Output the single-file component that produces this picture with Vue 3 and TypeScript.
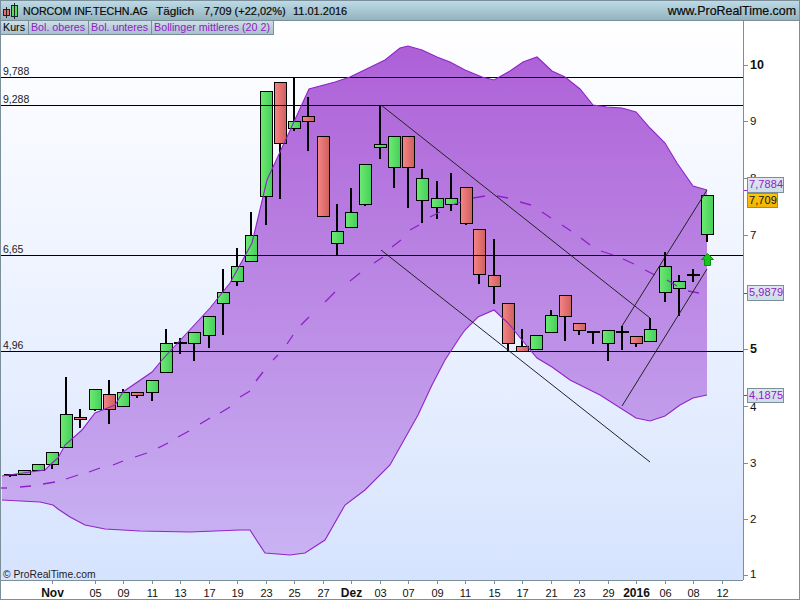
<script setup lang="ts">
type Candle = { x: number; top: number; bot: number; hi: number; lo: number; up: boolean };
type Doji = { x: number; y: number; hi: number; lo: number };

const raw: [number, number, number, number, number, number][] = [
  [24, 470, 475, 470, 475, 1], [38, 464, 471, 464, 471, 1], [52, 452, 465, 452, 469, 1],
  [66, 414, 448, 377, 448, 1], [80, 417, 420, 409, 428, 0], [95, 389, 410, 389, 411, 1],
  [109, 394, 410, 380, 424, 0], [123, 392, 407, 389, 407, 1], [137, 392, 396, 392, 398, 0],
  [152, 380, 393, 380, 401, 1], [166, 343, 373, 329, 373, 1], [194, 332, 344, 332, 361, 1],
  [209, 316, 336, 316, 348, 1], [223, 292, 304, 269, 335, 1], [237, 266, 282, 248, 286, 1],
  [251, 235, 262, 212, 262, 1], [266, 91, 197, 91, 225, 1], [280, 82, 144, 82, 199, 0],
  [294, 121, 129, 77, 131, 1], [308, 116, 122, 97, 151, 0], [323, 136, 217, 136, 217, 0],
  [337, 231, 244, 204, 255, 1], [351, 212, 228, 188, 228, 1], [365, 164, 205, 164, 206, 1],
  [380, 144, 148, 105, 159, 1], [394, 136, 168, 136, 188, 1], [408, 136, 168, 136, 208, 0],
  [422, 178, 201, 169, 223, 1], [437, 198, 208, 181, 219, 1], [451, 198, 205, 173, 211, 1],
  [466, 187, 224, 187, 225, 0], [479, 229, 275, 229, 284, 0], [494, 275, 287, 239, 304, 0],
  [508, 303, 344, 303, 352, 0], [522, 346, 352, 329, 352, 0], [536, 335, 350, 335, 350, 1],
  [551, 315, 333, 310, 333, 1], [565, 295, 317, 295, 341, 0], [579, 323, 331, 323, 335, 0],
  [608, 330, 344, 330, 361, 1], [636, 336, 344, 336, 347, 0], [650, 329, 342, 318, 342, 1],
  [665, 266, 293, 252, 302, 1], [679, 281, 289, 275, 316, 1], [707, 195, 235, 195, 242, 1],
];
const candles: Candle[] = raw.map(([x, top, bot, hi, lo, up]) => ({ x, top, bot, hi, lo, up: up === 1 }));
const dojis: Doji[] = [
  { x: 10, y: 475, hi: 474, lo: 477 }, { x: 180, y: 343, hi: 338, lo: 354 },
  { x: 593, y: 332, hi: 331, lo: 344 }, { x: 622, y: 332, hi: 326, lo: 350 },
  { x: 693, y: 275, hi: 269, lo: 282 },
];

const upper: [number, number][] = [
  [2, 476], [30, 472], [45, 470], [52, 463], [58, 458], [65, 445], [82, 430], [95, 413], [115, 405], [123, 392],
  [152, 372], [162, 360], [210, 308], [230, 283], [252, 243], [267, 180], [287, 137], [309, 89], [335, 82], [350, 77],
  [385, 60], [400, 48], [408, 46], [422, 50], [437, 57], [450, 62], [465, 70], [482, 77], [494, 80], [510, 71],
  [523, 62], [537, 57], [552, 71], [565, 77], [580, 89], [593, 105], [607, 107], [622, 108], [636, 112], [650, 128],
  [665, 143], [677, 163], [693, 186], [707, 190],
];
const lower: [number, number][] = [
  [2, 500], [40, 502], [53, 505], [58, 509], [70, 517], [85, 525], [105, 529], [140, 531], [190, 532], [240, 530],
  [250, 530], [265, 553], [290, 555], [305, 553], [325, 540], [345, 505], [365, 490], [390, 465], [404, 440], [418, 415],
  [432, 385], [445, 360], [460, 337], [465, 330], [478, 317], [494, 310], [508, 323], [522, 340], [537, 358], [552, 367],
  [570, 380], [600, 395], [636, 418], [650, 421], [665, 416], [680, 405], [693, 398], [707, 395],
];
const dashes: number[][] = [
  [0, 488, 7, 488], [20, 487, 31, 486], [43, 484, 55, 482], [66, 479, 78, 475], [89, 472, 100, 468],
  [113, 465, 123, 461], [135, 457, 147, 453], [158, 448, 168, 443], [178, 437, 189, 431], [200, 424, 210, 418],
  [220, 413, 230, 407], [240, 397, 250, 391], [256, 381, 263, 372], [273, 360, 278, 355], [287, 344, 293, 335],
  [301, 325, 309, 317], [325, 302, 335, 292], [350, 281, 360, 273], [374, 263, 383, 257], [392, 247, 401, 240],
  [410, 230, 419, 225], [430, 217, 440, 212], [452, 205, 461, 202], [473, 198, 485, 196], [497, 196, 508, 198],
  [520, 202, 531, 205], [542, 212, 551, 218], [562, 225, 571, 231], [581, 238, 590, 245], [601, 251, 613, 255],
  [623, 259, 634, 264], [645, 270, 655, 275], [667, 280, 677, 286], [688, 291, 699, 293],
];
const pts = (a: [number, number][]) => a.map((p) => p.join(",")).join(" ");
const bandPoints = pts([...upper, ...[...lower].reverse()]);
const upperLine = pts(upper);
const lowerLine = pts(lower);

const levels = [
  { y: 77, label: "9,788" }, { y: 105, label: "9,288" },
  { y: 255, label: "6,65" }, { y: 351, label: "4,96" },
];
const trends = [
  [381, 105, 650, 318], [381, 250, 650, 462], [622, 406, 707, 269], [622, 326, 707, 190],
];
const yTicks = [
  { y: 65, t: "10", b: true, base: 68.5 }, { y: 121, t: "9", b: false, base: 125 },
  { y: 178, t: "8", b: false, base: 182 }, { y: 235, t: "7", b: false, base: 239 },
  { y: 349, t: "5", b: true, base: 352.5 }, { y: 406, t: "4", b: false, base: 410.5 },
  { y: 463, t: "3", b: false, base: 467 }, { y: 519, t: "2", b: false, base: 523 },
  { y: 575, t: "1", b: false, base: 578 },
];
const flags = [
  { y: 177, h: 16, w: 37, t: "7,7884", tick: 190, gold: false },
  { y: 193, h: 15, w: 31, t: "7,709", tick: 0, gold: true },
  { y: 285, h: 16, w: 37, t: "5,9879", tick: 293, gold: false },
  { y: 388, h: 15, w: 37, t: "4,1875", tick: 395, gold: false },
];
const xTicks = [
  { x: 52, t: "Nov", b: true }, { x: 95, t: "05" }, { x: 123, t: "09" }, { x: 152, t: "11" },
  { x: 180, t: "13" }, { x: 209, t: "17" }, { x: 237, t: "19" }, { x: 266, t: "23" },
  { x: 294, t: "25" }, { x: 323, t: "27" }, { x: 351, t: "Dez", b: true }, { x: 380, t: "03" },
  { x: 408, t: "07" }, { x: 437, t: "09" }, { x: 465, t: "11" }, { x: 494, t: "15" },
  { x: 522, t: "17" }, { x: 551, t: "21" }, { x: 579, t: "23" }, { x: 608, t: "29" },
  { x: 636, t: "2016", b: true }, { x: 665, t: "06" }, { x: 693, t: "08" }, { x: 722, t: "12" },
];
const legend = [
  { t: "Kurs", dark: true }, { t: "Bol. oberes" }, { t: "Bol. unteres" }, { t: "Bollinger mittleres (20 2)" },
];
</script>

<template>
  <div class="frame">
    <header class="top">
      <svg class="logo" width="16" height="16" viewBox="0 0 16 16">
        <rect x="0.5" y="6.5" width="6" height="6" fill="#e86a6a" stroke="#222" />
        <rect x="3" y="4" width="1" height="11" fill="#222" />
        <rect x="8.5" y="2.5" width="6" height="11" fill="#55dd5e" stroke="#222" />
        <rect x="11" y="0" width="1" height="16" fill="#222" />
      </svg>
      <span class="name">NORCOM INF.TECHN.AG</span>
      <span class="period">Täglich</span>
      <span class="price">7,709 (+22,02%)</span>
      <span class="date">11.01.2016</span>
      <span class="site">www.ProRealTime.com</span>
    </header>

    <div class="middle">
      <div class="plot">
        <ul class="legend">
          <li v-for="l in legend" :key="l.t" :class="{ dark: l.dark }">{{ l.t }}</li>
        </ul>
        <svg class="plot-svg" width="742" height="559" viewBox="1 21 742 559">
          <defs>
            <linearGradient id="band" gradientUnits="userSpaceOnUse" x1="0" y1="46" x2="0" y2="556">
              <stop offset="0" stop-color="#ae60d7" />
              <stop offset="1" stop-color="#c9b3f3" />
            </linearGradient>
            <linearGradient id="up" x1="0" x2="1" y1="0" y2="0">
              <stop offset="0" stop-color="#6eea70" />
              <stop offset="1" stop-color="#44cf5c" />
            </linearGradient>
            <linearGradient id="down" x1="0" x2="1" y1="0" y2="0">
              <stop offset="0" stop-color="#f68585" />
              <stop offset="1" stop-color="#cf5f5f" />
            </linearGradient>
          </defs>

          <polygon :points="bandPoints" fill="url(#band)" />

          <g v-for="c in candles" :key="c.x">
            <rect :x="c.x - 1" :y="c.hi" width="2" :height="c.lo - c.hi" fill="#000" />
            <rect
              :x="c.x - 5.5"
              :y="c.top + 0.5"
              width="12"
              :height="c.bot - c.top - 1"
              :fill="c.up ? 'url(#up)' : 'url(#down)'"
              stroke="#000"
            />
          </g>
          <g v-for="d in dojis" :key="d.x">
            <rect :x="d.x - 1" :y="d.hi" width="2" :height="d.lo - d.hi" fill="#000" />
            <rect :x="d.x - 6" :y="d.y - 1" width="13" height="2" fill="#000" />
          </g>

          <g v-for="l in levels" :key="l.y">
            <rect x="1" :y="l.y" width="742" height="1" fill="#000" />
            <text class="lvl" x="3" :y="l.y - 2">{{ l.label }}</text>
          </g>

          <polyline :points="upperLine" class="bol" />
          <polyline :points="lowerLine" class="bol" />
          <line
            v-for="d in dashes"
            :key="d.join()"
            :x1="d[0]"
            :y1="d[1]"
            :x2="d[2]"
            :y2="d[3]"
            class="dash"
          />

          <line
            v-for="t in trends"
            :key="t.join()"
            :x1="t[0]"
            :y1="t[1]"
            :x2="t[2]"
            :y2="t[3]"
            stroke="#222"
            stroke-width="1"
          />

          <polygon
            points="707.5,253.5 713.5,259.5 710.5,259.5 710.5,265.5 704.5,265.5 704.5,259.5 701.5,259.5"
            fill="#12c61a"
            stroke="#0c8f12"
          />

          <text class="copy" x="3" y="578">© ProRealTime.com</text>
        </svg>
      </div>

      <div class="yaxis">
        <svg width="55" height="559" viewBox="744 21 55 559">
          <g v-for="t in yTicks" :key="t.t">
            <rect x="744" :y="t.y" width="4" height="1" fill="#7b8f9b" />
            <text class="ylab" :class="{ bold: t.b }" x="750" :y="t.base">{{ t.t }}</text>
          </g>
          <g v-for="f in flags" :key="f.t">
            <rect v-if="f.tick" x="744" :y="f.tick" width="4" height="1" fill="#9a22cc" />
          </g>
        </svg>
        <div
          v-for="f in flags"
          :key="f.t"
          class="flag"
          :class="{ gold: f.gold }"
          :style="{ top: f.y - 21 + 'px', height: f.h + 'px', width: f.w + 'px' }"
        >
          {{ f.t }}
        </div>
      </div>
    </div>

    <svg class="xaxis" width="798" height="19" viewBox="1 580 798 19">
      <rect x="1" y="580" width="742" height="1" fill="#7b8f9b" />
      <g v-for="t in xTicks" :key="t.x">
        <rect :x="t.x" y="581" width="1" height="3" fill="#7b8f9b" />
        <text class="xlab" :class="{ bold: t.b }" :x="t.x + 0.5" y="597">{{ t.t }}</text>
      </g>
    </svg>
  </div>
</template>

<style scoped>
.frame {
  width: 800px;
  height: 600px;
  box-sizing: border-box;
  border: 1px solid #7b8f9b;
  display: flex;
  flex-direction: column;
  background: #fff;
  overflow: hidden;
  font-family: "Liberation Sans", Arial, sans-serif;
  color: #000;
}
.top {
  flex: 0 0 20px;
  box-sizing: border-box;
  height: 20px;
  background: linear-gradient(#bddbe7, #93b3bf);
  border-bottom: 1px solid #7b8f9b;
  display: flex;
  align-items: center;
  padding: 0 3px 0 2px;
  font-size: 11px;
  white-space: nowrap;
  color: #0a0a0a;
  -webkit-text-stroke: 0.2px #0a0a0a;
}
.logo {
  margin-right: 4px;
  flex: none;
}
.name {
  width: 133px;
  font-size: 10.6px;
}
.period {
  width: 48px;
  font-size: 11.8px;
}
.price {
  width: 89px;
}
.site {
  margin-left: auto;
  font-size: 12.4px;
}
.middle {
  flex: 1;
  display: flex;
  min-height: 0;
}
.plot {
  position: relative;
  width: 742px;
  height: 559px;
  background: linear-gradient(#ffffff 0%, #f4f7ff 30%, #e6eeff 65%, #d6e3fe 100%);
  flex: none;
}
.plot-svg {
  display: block;
}
.legend {
  position: absolute;
  left: 0;
  top: 0;
  z-index: 2;
  display: flex;
  margin: 0;
  padding: 0;
  list-style: none;
  font-size: 10.7px;
  color: #9020c4;
}
.legend li {
  height: 14px;
  line-height: 13px;
  box-sizing: border-box;
  padding: 0 3px 0 2px;
  background: linear-gradient(#cfdee7, #a8c1cd);
  border-right: 1px solid #7b8f9b;
  border-bottom: 1px solid #7b8f9b;
  white-space: nowrap;
}
.legend li.dark {
  color: #000;
}
.yaxis {
  position: relative;
  flex: 1;
  border-left: 1px solid #7b8f9b;
  background: #fff;
}
.yaxis svg {
  display: block;
}
.flag {
  position: absolute;
  left: 3px;
  box-sizing: border-box;
  border: 1px solid #7b8f9b;
  background: linear-gradient(#dfe7f1, #cfdcea);
  color: #9020c4;
  font-size: 11px;
  line-height: 13px;
  padding-left: 1px;
  white-space: nowrap;
  letter-spacing: 0.1px;
}
.flag.gold {
  background: linear-gradient(#fcc60c, #f2b406);
  color: #111;
}
.xaxis {
  display: block;
  flex: none;
  height: 19px;
  background: #fff;
}
.lvl {
  font-size: 10.5px;
  fill: #222;
}
.copy {
  font-size: 10.3px;
  fill: #222;
}
.bol {
  fill: none;
  stroke: #9025c8;
  stroke-width: 1.1;
}
.dash {
  stroke: #8f20c8;
  stroke-width: 1.3;
}
.ylab {
  font-size: 11.5px;
  fill: #111;
}
.ylab.bold {
  font-size: 12.5px;
  font-weight: 700;
}
.xlab {
  font-size: 11px;
  fill: #111;
  text-anchor: middle;
}
.xlab.bold {
  font-size: 12px;
  font-weight: 700;
}
</style>
